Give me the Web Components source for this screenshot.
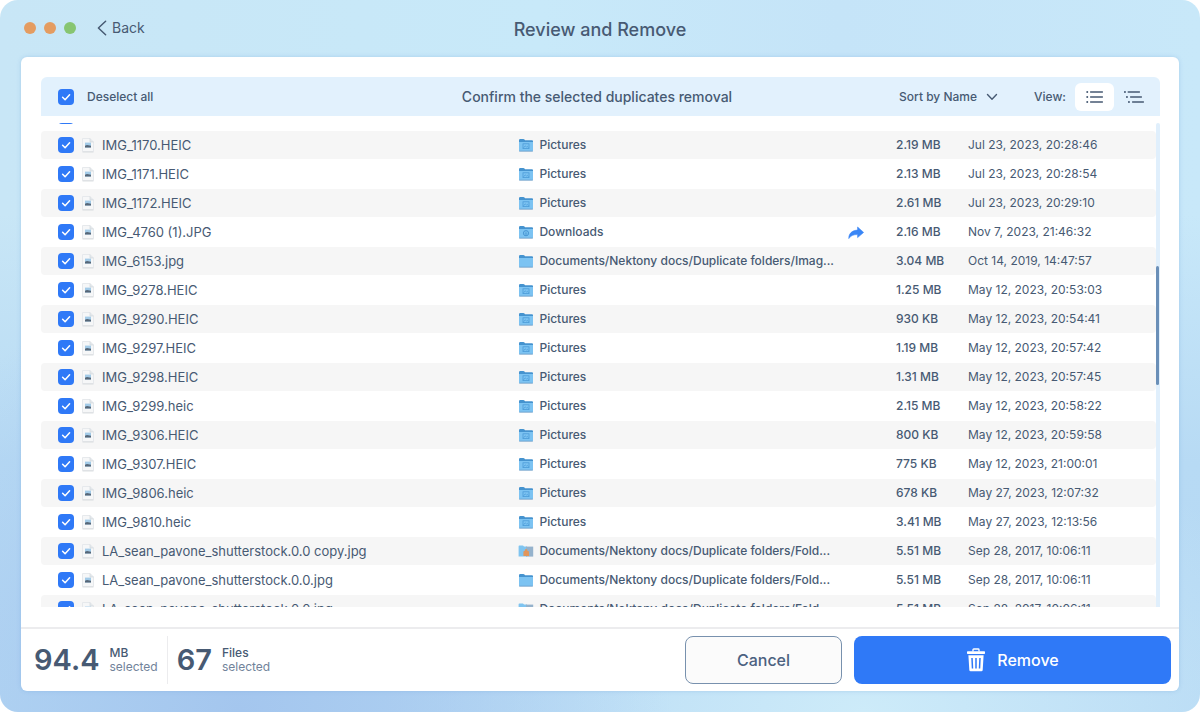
<!DOCTYPE html>
<html lang="en">
<head>
<meta charset="utf-8">
<meta name="viewport" content="width=device-width, initial-scale=1">
<title>Review and Remove</title>
<style>
  html, body { margin: 0; height: 100%; background: #fff; }
  body { font: 500 12px/16px Inter, "Liberation Sans", sans-serif; color: #475a73; }
</style>
</head>
<body>
<app-window>
  <title-bar slot="title">Review and Remove</title-bar>
  <list-header>Confirm the selected duplicates removal</list-header>
  <file-list></file-list>
  <summary-bar slot="footer">
    <stat-figure value="94.4" unit="MB">selected</stat-figure>
    <stat-figure value="67" unit="Files">selected</stat-figure>
    <action-button slot="actions">Cancel</action-button>
    <action-button slot="actions" primary><ui-icon slot="icon" name="trash"></ui-icon>Remove</action-button>
  </summary-bar>
</app-window>

<script>
const define = (name, html, setup) => customElements.define(name, class extends HTMLElement {
  constructor() {
    super();
    this.attachShadow({ mode: "open" });
  }
  connectedCallback() {
    if (this.shadowRoot.childNodes.length) return;
    const t = document.createElement("template");
    t.innerHTML = typeof html === "function" ? html(this) : html;
    this.shadowRoot.append(t.content.cloneNode(true));
    if (setup) setup(this.shadowRoot, this);
  }
});

const folder = (mark) => `<svg width="16" height="16" viewBox="0 0 16 16">
  <path d="M1 13V3.2Q1 2 2.2 2H5.4Q6 2 6.5 2.6L7 3.2H14Q15 3.2 15 4.2V13Z" fill="#4593cf"/>
  <path d="M1 5H15V13.4Q15 14 14.2 14H1.8Q1 14 1 13.4Z" fill="#7cc3f2"/>
  <path d="M1.2 14.2H14.8" stroke="#6b9fc9" stroke-width=".9"/>${mark}</svg>`;

const icons = {
  back: `<svg width="10" height="16" viewBox="0 0 10 16"><path d="M8.6 1.2 1.4 8l7.2 6.8" fill="none" stroke="#475a73" stroke-width="1.5" stroke-linecap="round" stroke-linejoin="round"/></svg>`,
  chevron: `<svg width="12" height="8" viewBox="0 0 12 8"><path d="m1.5 1.5 4.5 4.7 4.5-4.7" fill="none" stroke="#475a73" stroke-width="1.4" stroke-linecap="round" stroke-linejoin="round"/></svg>`,
  list: `<svg width="20" height="14" viewBox="0 0 20 14" fill="none" stroke="#475a73" stroke-width="1.4" stroke-linecap="round"><path d="M5.6 2H17.4M5.6 7H17.4M5.6 12H17.4"/><path d="M2.2 2h.1M2.2 7h.1M2.2 12h.1" stroke-width="1.9"/></svg>`,
  tree: `<svg width="22" height="14" viewBox="0 0 22 14" fill="none" stroke="#475a73" stroke-width="1.4" stroke-linecap="round"><path d="M5.2 2H16.4M7.6 7H18.4M9.6 12H20.4"/><path d="M1.9 2h.1M3.9 7h.1M5.9 12h.1" stroke-width="1.9"/></svg>`,
  trash: `<svg width="20" height="24" viewBox="0 0 20 24"><path d="M7 3.5V1.8Q7 1 7.8 1h4.4q.8 0 .8.8v1.7" fill="none" stroke="#fff" stroke-width="1.3"/><rect x="1" y="3.2" width="18" height="2.8" rx=".7" fill="#fff"/><path d="M2.4 7.2H17.6L16.7 22Q16.6 23.2 15.4 23.2H4.6Q3.4 23.2 3.3 22Z" fill="#fff"/><path d="m6 10 .5 10.5M10 10v10.5M14 10l-.5 10.5" stroke="#2f79f7" stroke-width="1.5"/></svg>`,
  photo: `<svg width="14" height="16" viewBox="0 0 14 16"><path d="M1.5 1.5H9L12.5 5V14.5H1.5Z" fill="#f6f7f8" stroke="#e6e9ec"/><path d="M9 1.5V5h3.5" fill="#e4e8ec" stroke="#d3d8dd" stroke-width=".7"/><rect x="4" y="5.6" width="6" height="5" fill="#a3cbe8"/><path d="M4 8.7 6 8 10 8.8V10.6H4Z" fill="#566677"/><path d="M1.5 15H12.5" stroke="#d3d7db" stroke-width=".8"/></svg>`,
  pictures: folder(`<rect x="5" y="6.8" width="6" height="4.8" fill="none" stroke="#4b9bd8" stroke-width=".8"/><path d="m5.6 10.8 1.5-2 1.3 1.2 1-.8 1 1.6" fill="none" stroke="#4b9bd8" stroke-width=".7"/>`),
  downloads: folder(`<circle cx="8" cy="9.2" r="2.6" fill="none" stroke="#3f8fce" stroke-width=".9"/><path d="M8 7.8v2.6M6.9 9.4 8 10.5 9.1 9.4" fill="none" stroke="#3f8fce" stroke-width=".7"/>`),
  folder: folder(""),
  shared: `<svg width="16" height="16" viewBox="0 0 16 16"><path d="M.6 3.4Q.6 2.6 1.4 2.6H5L6 3.6H9V13.6H.6Z" fill="#7fc4f0"/><path d="M8 3.6H15.2V13.6H8Z" fill="#95b2cc"/><path d="M5.4 13V8.4L7 7.6V6.2h2.2v1.4l1.8.8V13Z" fill="#e2955a"/></svg>`,
  share: `<svg width="16" height="14" viewBox="0 0 16 14"><path d="M9.6 1 15.6 6.4 9.6 11.6V8.6C5.6 8.4 2.7 9.6.8 12.6.7 7.8 3.8 4.4 9.6 4.1Z" fill="#3a86f6" stroke="#3a86f6" stroke-width=".6" stroke-linejoin="round"/></svg>`
};

define("ui-icon", (el) => `<style>:host{display:inline-flex;flex:none}svg{display:block}</style>${icons[el.getAttribute("name")]}`);

define("app-window", `<style>
  :host { display: flex; flex-direction: column; box-sizing: border-box; height: 100vh; padding: 0 21px 21px; border-radius: 18px; overflow: hidden;
    background:
      radial-gradient(ellipse 36% 60% at 20% 100%, #a4c6ee 0, #a4c6ee00 100%),
      radial-gradient(ellipse 40% 40% at 72% 100%, #cdebf9 0, #cdebf900 100%),
      linear-gradient(#c9e8f800 0, #c5e4f800 30%, #b7daf4 65%, #b5d8f4 100%),
      linear-gradient(90deg, #c8e6f6, #c8e9f9 45%, #c5e4f8 70%, #c8e8f9); }
  main { flex: 1; min-height: 0; display: flex; flex-direction: column; background: #fff; border-radius: 6px; box-shadow: 0 0 4px #6a9fd855; overflow: hidden; }
  .content { flex: 1; min-height: 0; display: flex; flex-direction: column; gap: 7px; padding: 20px 19px 20px 20px; }
</style>
<slot name="title"></slot>
<main><div class="content"><slot></slot></div><slot name="footer"></slot></main>`);

define("title-bar", `<style>
  :host { display: grid; grid-template-columns: 1fr auto 1fr; align-items: center; box-sizing: border-box; height: 57px; padding-bottom: 1px; flex: none; }
  .left { display: flex; align-items: center; gap: 21px; padding-left: 3px; }
  .lights { display: flex; gap: 8px; }
  i { width: 12px; height: 12px; border-radius: 50%; background: #e49c61; }
  i:last-child { background: #87c571; }
  button { display: flex; align-items: center; gap: 5px; padding: 0; border: 0; background: none; font: 400 14px/20px Inter, sans-serif; color: inherit; }
  h1 { margin: 4px 0 0; font-size: 18px; line-height: 24px; font-weight: 500; }
</style>
<div class="left"><div class="lights"><i></i><i></i><i></i></div><button type="button"><ui-icon name="back"></ui-icon>Back</button></div>
<h1><slot></slot></h1>`);

define("check-field", `<style>
  :host { display: block; }
  label { display: flex; align-items: center; white-space: nowrap; }
  input { appearance: none; flex: none; width: 16px; height: 16px; margin: 0; border: 1px solid #9db1c8; border-radius: 4px; background: #fff; }
  input:checked { border: 0; background: #2f79f7 url('data:image/svg+xml,<svg xmlns="http://www.w3.org/2000/svg" viewBox="0 0 16 16"><path d="m4.6 8.2 2.5 2.5 4.5-5" fill="none" stroke="white" stroke-width="1.5" stroke-linecap="round" stroke-linejoin="round"/></svg>'); }
</style>
<label><input type="checkbox" checked><slot></slot></label>`);

define("list-header", `<style>
  :host { display: grid; grid-template-columns: 1fr auto 1fr; align-items: center; box-sizing: border-box; height: 39px; flex: none; padding: 0 7px 0 0; border-radius: 6px 6px 0 0; background: #e2f1fd; }
  check-field { padding-left: 17px; }
  .all { padding-left: 13px; }
  h2 { margin: 0; font-size: 14px; line-height: 20px; font-weight: 500; }
  .right { display: flex; align-items: center; justify-content: flex-end; }
  .sort { position: relative; margin-right: 36px; }
  .sort ui-icon { position: absolute; right: 0; top: 4px; pointer-events: none; }
  select { display: block; appearance: none; border: 0; margin: 0; padding: 0 20px 0 0; background: none; font: inherit; color: inherit; }
  .views { display: flex; margin-left: 9px; }
  button { display: grid; place-items: center; width: 39px; height: 28px; padding: 0; border: 0; border-radius: 6px; background: none; }
  button[aria-pressed=true] { background: #fff; }
</style>
<check-field><span class="all">Deselect all</span></check-field>
<h2><slot></slot></h2>
<div class="right">
  <div class="sort"><select aria-label="Sort order"><option>Sort by Name</option></select><ui-icon name="chevron"></ui-icon></div>
  <span>View:</span>
  <div class="views"><button type="button" aria-label="List" aria-pressed="true"><ui-icon name="list"></ui-icon></button><button type="button" aria-label="Tree" aria-pressed="false"><ui-icon name="tree"></ui-icon></button></div>
</div>`);

define("summary-bar", `<style>
  :host { display: flex; align-items: center; justify-content: space-between; height: 62px; flex: none; padding: 0 8px 0 13px; border-top: 2px solid #ececee; }
  .stats, .actions { display: flex; align-items: center; }
  .actions { gap: 12px; }
</style>
<div class="stats"><slot></slot></div><div class="actions"><slot name="actions"></slot></div>`);

define("stat-figure", (el) => `<style>
  :host { display: flex; align-items: center; gap: 10px; height: 48px; padding-right: 9px; }
  :host(:first-of-type) { border-right: 1px solid #ececee; margin-right: 9px; }
  b { font-size: 29px; line-height: 32px; font-weight: 600; }
  div { line-height: 14px; }
  small { display: block; font-size: 12px; font-weight: 400; color: #71839a; }
</style><b>${el.getAttribute("value")}</b><div>${el.getAttribute("unit")}<small><slot></slot></small></div>`);

define("action-button", `<style>
  :host { display: block; width: 157px; }
  :host([primary]) { width: 317px; }
  button { display: flex; align-items: center; justify-content: center; gap: 11px; box-sizing: border-box; width: 100%; height: 48px; border: 1px solid #7891ae; border-radius: 8px; background: #fbfbfb; font: 500 16px/20px Inter, sans-serif; color: #4b6180; }
  :host([primary]) button { border: 0; background: #2f79f7; color: #fff; }
</style><button type="button"><slot name="icon"></slot><slot></slot></button>`);

const docs = "Documents/Nektony docs/Duplicate folders/";
const P = ["pictures", "Pictures"];
const files = [
  ["IMG_1170.HEIC", ...P, "2.19 MB", "Jul 23, 2023, 20:28:46"],
  ["IMG_1171.HEIC", ...P, "2.13 MB", "Jul 23, 2023, 20:28:54"],
  ["IMG_1172.HEIC", ...P, "2.61 MB", "Jul 23, 2023, 20:29:10"],
  ["IMG_4760 (1).JPG", "downloads", "Downloads", "2.16 MB", "Nov 7, 2023, 21:46:32", true],
  ["IMG_6153.jpg", "folder", docs + "Imag...", "3.04 MB", "Oct 14, 2019, 14:47:57"],
  ["IMG_9278.HEIC", ...P, "1.25 MB", "May 12, 2023, 20:53:03"],
  ["IMG_9290.HEIC", ...P, "930 KB", "May 12, 2023, 20:54:41"],
  ["IMG_9297.HEIC", ...P, "1.19 MB", "May 12, 2023, 20:57:42"],
  ["IMG_9298.HEIC", ...P, "1.31 MB", "May 12, 2023, 20:57:45"],
  ["IMG_9299.heic", ...P, "2.15 MB", "May 12, 2023, 20:58:22"],
  ["IMG_9306.HEIC", ...P, "800 KB", "May 12, 2023, 20:59:58"],
  ["IMG_9307.HEIC", ...P, "775 KB", "May 12, 2023, 21:00:01"],
  ["IMG_9806.heic", ...P, "678 KB", "May 27, 2023, 12:07:32"],
  ["IMG_9810.heic", ...P, "3.41 MB", "May 27, 2023, 12:13:56"],
  ["LA_sean_pavone_shutterstock.0.0 copy.jpg", "shared", docs + "Fold...", "5.51 MB", "Sep 28, 2017, 10:06:11"],
  ["LA_sean_pavone_shutterstock.0.0.jpg", "folder", docs + "Fold...", "5.51 MB", "Sep 28, 2017, 10:06:11"],
  ["LA_sean_pavone_shutterstock.0.0.jpg", "shared", docs + "Fold...", "5.51 MB", "Sep 28, 2017, 10:06:11"]
];

// Defined last: its scroll offset needs the final height of the header and footer.
define("file-list", () => `<style>
  :host { display: flex; flex: 1; min-height: 0; }
  .view { flex: 1; min-width: 0; overflow: hidden; }
  table { width: 100%; table-layout: fixed; border-collapse: separate; border-spacing: 0 1px; }
  .name { width: 43%; } .go { width: 48px; } .size { width: 72px; } .date { width: 188px; }
  td { height: 28px; padding: 0; white-space: nowrap; vertical-align: middle; }
  tr:nth-child(even) td { background: #f6f6f6; }
  td:first-child { padding-left: 17px; border-radius: 4px 0 0 4px; }
  td:last-child { border-radius: 0 4px 4px 0; font-weight: 400; }
  .file { display: flex; align-items: center; gap: 7px; padding-left: 7px; font-size: 13px; font-weight: 400; }
  .place { display: flex; align-items: center; gap: 5px; margin-left: -2px; }
  td ui-icon { vertical-align: middle; }
  .track { width: 4px; background: #e0effc; border-radius: 2px 2px 0 0; display: grid; grid-template-rows: 143fr 120fr 222fr; }
  .thumb { grid-row: 2; width: 3px; background: #6a8fb8; border-radius: 2px; }
</style>
<div class="view"><table>
<colgroup><col class="name"><col><col class="go"><col class="size"><col class="date"></colgroup>
<tbody>
<tr><td><check-field></check-field></td><td></td><td></td><td></td><td></td></tr>
${files.map(([n, ic, p, s, d, go]) => `<tr><td><check-field><span class="file"><ui-icon name="photo"></ui-icon>${n}</span></check-field></td><td><span class="place"><ui-icon name="${ic}"></ui-icon>${p}</span></td><td>${go ? `<ui-icon name="share"></ui-icon>` : ""}</td><td>${s}</td><td>${d}</td></tr>`).join("")}
</tbody></table></div>
<div class="track"><div class="thumb"></div></div>`, (root) => {
  root.querySelector(".view").scrollTop = 22;
});
</script>
</body>
</html>
